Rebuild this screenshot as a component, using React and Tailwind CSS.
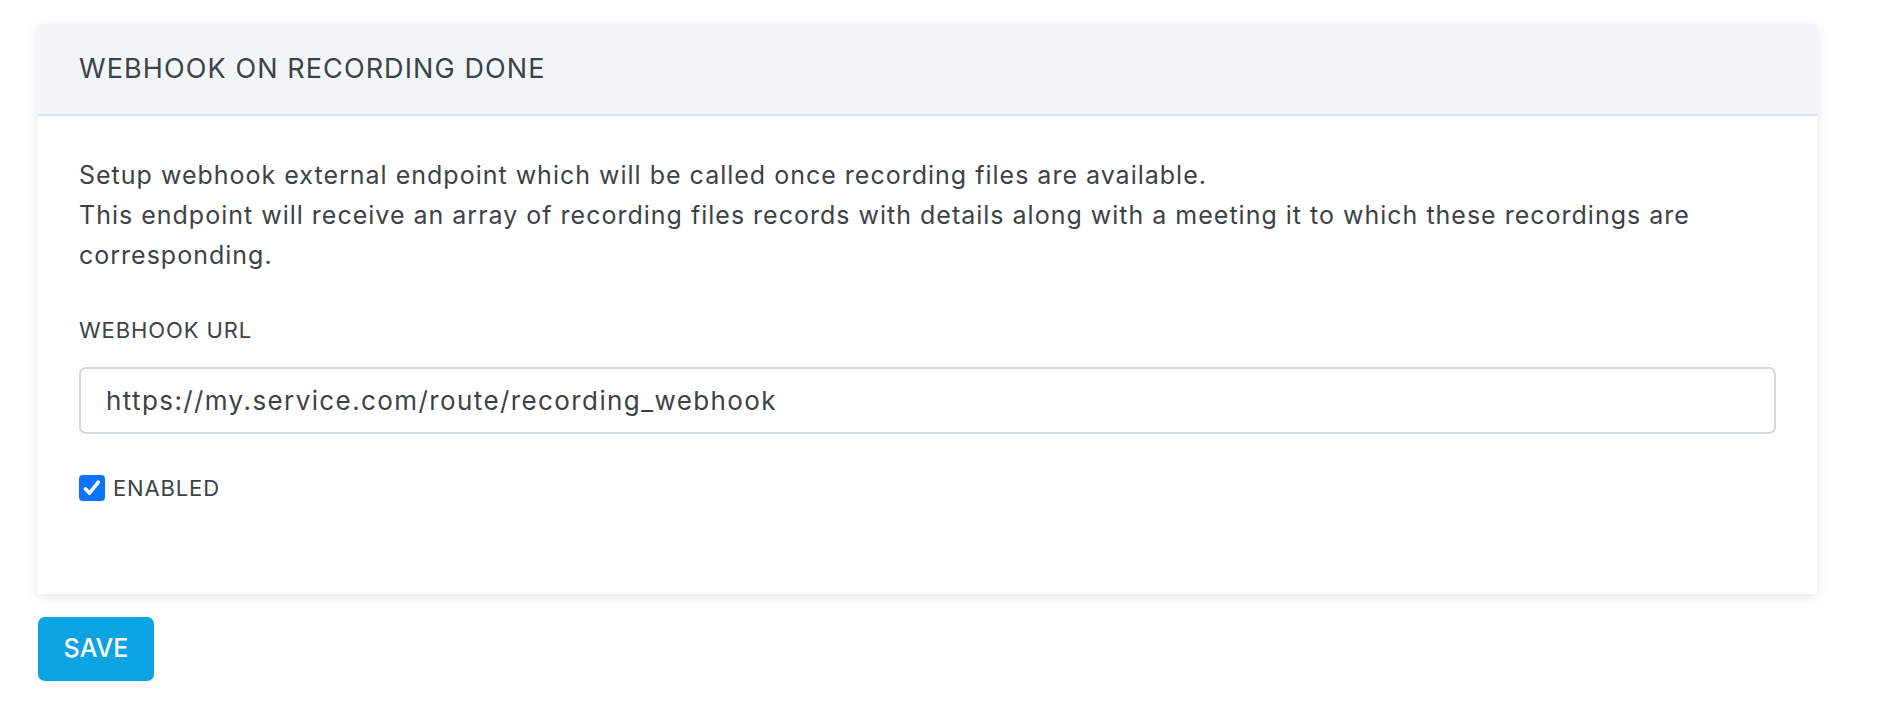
import React, { useState } from "react";

const font = { fontFamily: "Inter, 'Open Sans', sans-serif" };

export default function App() {
  const [url, setUrl] = useState("https://my.service.com/route/recording_webhook");
  const [enabled, setEnabled] = useState(true);

  return (
    <div className="min-h-[714px] bg-white pl-[38px] pr-[73px] pt-6 text-[#3d4247]" style={font}>
      <div className="bg-white shadow-[0_3px_10px_rgba(50,70,100,0.14)]">
        <div className="flex h-[92px] items-center border-b-2 border-[#dde6ee] bg-[#f3f6f9] px-[41px]">
          <h2 className="text-[27px] font-normal tracking-[1.1px]">WEBHOOK ON RECORDING DONE</h2>
        </div>

        <div className="px-[41px] pb-[93px] pt-[39px]">
          <p className="text-[25px] leading-[40px] tracking-[1px]">
            Setup webhook external endpoint which will be called once recording files are available.
            <br />
            This endpoint will receive an array of recording files records with details along with a meeting it to which these recordings are corresponding.
          </p>

          <label className="mt-[41px] block text-[22px] leading-[28px] tracking-[0.9px]">WEBHOOK URL</label>
          <input
            type="text"
            value={url}
            onChange={(e) => setUrl(e.target.value)}
            className="mt-[23px] block h-[67px] w-full rounded-[7px] border-2 border-[#d3d8de] px-[25px] text-[26px] tracking-[1.4px] text-[#3d4247] outline-none"
          />

          <label className="mt-[41px] flex items-center gap-[8px] text-[22px] leading-[26px] tracking-[0.85px]">
            <button
              type="button"
              onClick={() => setEnabled(!enabled)}
              className={`flex h-[26px] w-[26px] items-center justify-center rounded-[4px] ${enabled ? "bg-[#0b73fe]" : "border-2 border-[#c5ccd3] bg-white"}`}
            >
              {enabled && (
                <svg width="22" height="22" viewBox="0 0 16 16" fill="none">
                  <path d="M3.2 8.6l3 3.2 6.4-8" stroke="white" strokeWidth="2.6" strokeLinecap="round" strokeLinejoin="round" />
                </svg>
              )}
            </button>
            ENABLED
          </label>
        </div>
      </div>

      <button className="mt-[23px] h-[64px] w-[116px] rounded-[7px] bg-[#0ba3e2] text-[25px] font-medium text-white">
        SAVE
      </button>
    </div>
  );
}
